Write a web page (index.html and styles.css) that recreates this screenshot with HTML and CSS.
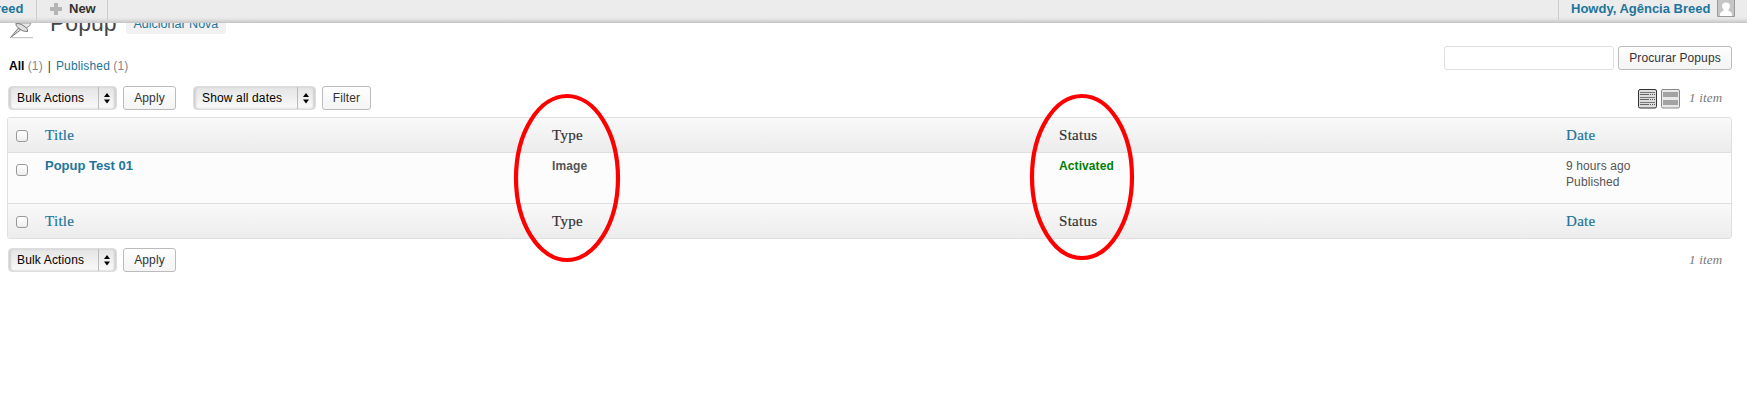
FILE: index.html
```html
<!DOCTYPE html>
<html lang="en">
<head>
<meta charset="utf-8">
<title>Popups</title>
<link rel="stylesheet" href="styles.css">
</head>
<body>
<header class="bar">
  <div class="bar-item site"><span>reed</span></div>
  <div class="bar-item new"><svg width="12" height="12" viewBox="0 0 12 12"><path d="M4 0h4v4h4v4H8v4H4V8H0V4h4z" fill="#b4b4b4"/></svg><span>New</span></div>
  <div class="bar-item user"><span>Howdy, Agência Breed</span><svg class="avatar" width="18" height="17" viewBox="0 0 18 17"><path d="M.5 0v16.500h17V0" fill="#c5c5c5" stroke="#999"/><path d="M3 16v-2q0-2 4-3.500Q5 8 5 6q0-3.500 4-3.500T13 6q0 2-2 4.500 4 1.500 4 3.500v2z" fill="#fff"/></svg></div>
</header>
<main class="wrap">
  <div class="heading">
    <svg class="pin" width="28" height="18" viewBox="0 0 28 18"><path d="M3 14.700h21" stroke="#bbb"/><path d="M1.500 14.500 9.500 5l2 2z" fill="#ddd" stroke="#777" stroke-width="1"/><path d="M11 0 11.500 3l4 3 5-3L22 0z" fill="#e8e8e8" stroke="#999"/><path d="M7 0q-1 3 3 5.500 4 3.500 8.500 3 1-2-2-4.500-4-3.500-9.500-4z" fill="#e0e0e0" stroke="#777"/></svg>
    <h1>Popup</h1><a class="add">Adicionar Nova</a>
  </div>
  <div class="filters">
    <div class="views"><b>All</b> <i>(1)</i><span class="sep">|</span><a>Published</a> <i>(1)</i></div>
    <div class="search"><input type="text" class="field" aria-label="Search"><button class="btn find">Procurar Popups</button></div>
  </div>
  <div class="nav">
    <div class="select bulk"><span>Bulk Actions</span><svg width="18" height="22" viewBox="0 0 18 22"><path d="M.5 0v22" stroke="#bbb"/><path d="M6 10 9 6l3 4zM6 12.500h6l-3 4z"/></svg></div>
    <button class="btn apply">Apply</button>
    <div class="select dates"><span>Show all dates</span><svg width="18" height="22" viewBox="0 0 18 22"><path d="M.5 0v22" stroke="#bbb"/><path d="M6 10 9 6l3 4zM6 12.500h6l-3 4z"/></svg></div>
    <button class="btn filter">Filter</button>
    <div class="modes">
      <svg width="19" height="20" viewBox="0 0 19 20"><rect x=".5" y=".5" width="18" height="18.500" rx="1.500" fill="#ddd" stroke="#333"/><path d="M2 3.500h15M2 8.500h15M2 13.500h15" stroke="#777"/><path d="M2 5.500h9M2 10.500h9M2 15.500h9" stroke="#666"/><path d="M12 5.500h5M12 10.500h5M12 15.500h5" stroke="#555" stroke-dasharray="1 1"/></svg>
      <svg width="19" height="20" viewBox="0 0 19 20"><rect x=".5" y=".5" width="18" height="18.500" rx="1.500" fill="#e8e8e8" stroke="#888"/><path d="M2 3h15v5H2zM2 11h15v5H2z" fill="#a3a3a3"/></svg>
    </div>
    <em>1 item</em>
  </div>
  <section class="table">
    <div class="row head"><span class="check"></span><a>Title</a><span>Type</span><span>Status</span><a>Date</a></div>
    <div class="row data"><span class="check"></span><a class="title">Popup Test 01</a><b>Image</b><b class="active">Activated</b><p>9 hours ago<br>Published</p></div>
    <div class="row head foot"><span class="check"></span><a>Title</a><span>Type</span><span>Status</span><a>Date</a></div>
  </section>
  <div class="nav bottom">
    <div class="select bulk"><span>Bulk Actions</span><svg width="18" height="22" viewBox="0 0 18 22"><path d="M.5 0v22" stroke="#bbb"/><path d="M6 10 9 6l3 4zM6 12.500h6l-3 4z"/></svg></div>
    <button class="btn apply">Apply</button>
    <em>1 item</em>
  </div>
</main>
<svg class="marks" width="1754" height="403" viewBox="0 0 1754 403"><g fill="none" stroke="#f00" stroke-width="4.200"><ellipse cx="567" cy="178" rx="51" ry="82"/><ellipse cx="1082" cy="177" rx="50" ry="81"/></g></svg>
</body>
</html>
```
FILE: styles.css
```css
* { box-sizing: border-box; }
body { margin: 0; width: 1754px; height: 403px; overflow: hidden; background: #fff; color: #333; font: 12px/16px "Liberation Sans", Arial, sans-serif; }
a { color: #21759b; }
svg { display: block; flex: none; }
.bar { position: relative; z-index: 2; display: flex; width: 1747px; height: 23px; background: linear-gradient(#ececec 0 17px, #e5e5e5 19px, #c4c4c4); font-size: 13px; font-weight: bold; }
.bar-item { display: flex; height: 20px; align-items: flex-start; line-height: 17px; }
.site { width: 37px; border-right: 1px solid #ccc; color: #21759b; }
.site span { margin-left: -4px; }
.new { width: 71px; padding-left: 13px; gap: 7px; border-right: 1px solid #ccc; }
.new svg { margin-top: 3px; }
.user { margin-left: auto; width: 189px; padding-left: 12px; border-left: 1px solid #ccc; color: #21759b; }
.avatar { margin-left: auto; margin-right: 12px; }
.wrap { padding-left: 7px; width: 1732px; }
.heading { display: flex; height: 31px; align-items: flex-start; }
.pin { margin-left: 2px; }
h1 { margin: -15px 0 0 13px; font-size: 23px; font-weight: normal; line-height: 31px; color: #464646; }
.add { margin-left: 9px; margin-top: -12px; height: 23px; width: 100px; padding: 7px 8px; border-radius: 3px; background: #f1f1f1; font-size: 12.5px; line-height: 13px; white-space: nowrap; }
.filters { display: flex; height: 32px; align-items: flex-start; }
.views { padding: 4px 0 0 2px; }
.views b { color: #000; }
.views a, .views i { letter-spacing: .15px; }
.views i { font-style: normal; color: #888; }
.sep { margin: 0 5px; }
.search { display: flex; gap: 4px; margin: -8px 0 0 auto; }
.field { width: 170px; height: 24px; border: 1px solid #dfdfdf; border-radius: 3px; background: #fff; }
.btn { height: 24px; border: 1px solid #bbb; border-radius: 3px; background: linear-gradient(#fefefe, #f4f4f4); color: #333; font: 12px/16px "Liberation Sans", Arial, sans-serif; padding: 0 0 1px; white-space: nowrap; letter-spacing: .1px; }
.find { width: 114px; }
.nav { display: flex; height: 31px; align-items: flex-start; padding-left: 1px; }
.select { display: flex; height: 24px; align-items: center; justify-content: space-between; padding-left: 8px; border: 1px solid #ddd; border-radius: 4px; background: linear-gradient(#e4e4e4, #fafafa); box-shadow: inset 2px 0 2px #d0d0d0, inset -2px 0 2px #d0d0d0; color: #000; letter-spacing: .15px; }
.select span { padding-bottom: 1px; }
.bulk { width: 109px; }
.dates { width: 123px; margin-left: 17px; }
.apply { width: 53px; margin-left: 6px; }
.filter { width: 49px; margin-left: 6px; }
.modes { display: flex; gap: 4px; margin: 3px 0 0 auto; }
.nav em { width: 43px; margin-left: 9px; font: italic 13px/24px "Liberation Serif", serif; color: #777; letter-spacing: .2px; white-space: nowrap; }
.nav.bottom { padding-top: 9px; height: 40px; }
.bottom em { margin-left: auto; }
.table { height: 122px; border: 1px solid #dfdfdf; border-radius: 3px; overflow: hidden; }
.row { display: grid; grid-template-columns: 37px 507px 507px 507px 1fr; }
.head { height: 35px; border-bottom: 1px solid #dfdfdf; background: linear-gradient(#f9f9f9, #ececec); font: 15px/34px "Liberation Serif", serif; letter-spacing: .3px; -webkit-text-stroke: .2px; }
.foot { border-bottom: 0; }
.data { height: 51px; border-bottom: 1px solid #dfdfdf; padding-top: 5px; background: #fcfcfc; color: #555; letter-spacing: .1px; }
.title { font-size: 13px; font-weight: bold; letter-spacing: 0; }
.active { color: #008000; }
.data p { margin: 0; }
.check { width: 12px; height: 12px; margin: 12px 0 0 8px; border: 1px solid #999; border-radius: 3px; background: linear-gradient(#fff, #eee); }
.data .check { margin-top: 6px; }
.marks { position: absolute; left: 0; top: 0; z-index: 3; pointer-events: none; }
```
